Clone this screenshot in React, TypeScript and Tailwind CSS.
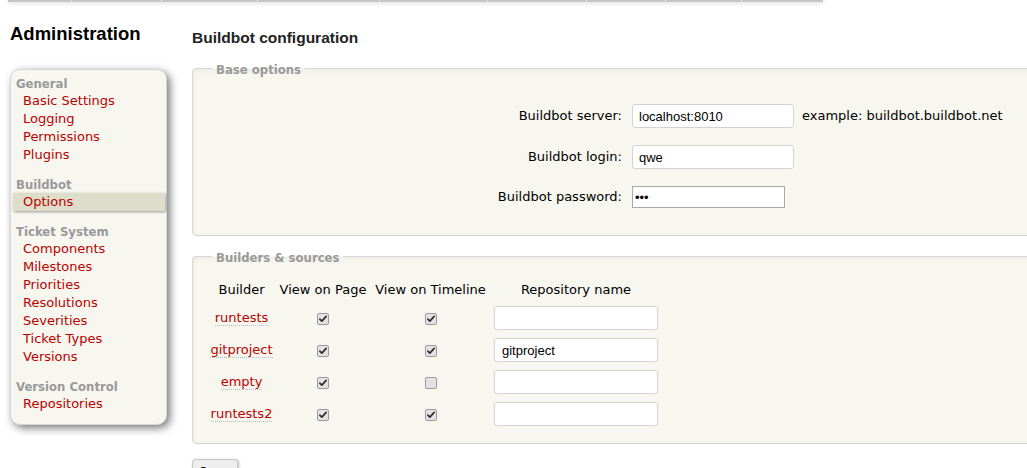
import type { ReactNode } from "react";

type NavGroup = {
  title: string;
  items: string[];
  active?: string;
};

const NAV_GROUPS: NavGroup[] = [
  {
    title: "General",
    items: ["Basic Settings", "Logging", "Permissions", "Plugins"],
  },
  { title: "Buildbot", items: ["Options"], active: "Options" },
  {
    title: "Ticket System",
    items: [
      "Components",
      "Milestones",
      "Priorities",
      "Resolutions",
      "Severities",
      "Ticket Types",
      "Versions",
    ],
  },
  { title: "Version Control", items: ["Repositories"] },
];

const BUILDERS = [
  { name: "runtests", page: true, timeline: true, repo: "" },
  { name: "gitproject", page: true, timeline: true, repo: "gitproject" },
  { name: "empty", page: true, timeline: false, repo: "" },
  { name: "runtests2", page: true, timeline: true, repo: "" },
];

// segments of the main nav bar, cut off at the top of the shot
const NAV_SEGMENTS = [
  "w-[63px]",
  "w-[90px]",
  "w-[96px]",
  "w-[122px]",
  "w-[108px]",
  "w-[99px]",
  "w-[79px]",
  "w-[76px]",
  "w-[82px]",
];

function Checkbox({ checked }: { checked: boolean }) {
  return (
    <span className="inline-flex h-[12px] w-[12px] items-center justify-center rounded-[2px] border border-[#9a9a9a] bg-[#e2e2e2] align-middle">
      {checked ? (
        <svg viewBox="0 0 12 12" className="h-[10px] w-[10px]">
          <path
            d="M2.2 6.2 L4.6 8.6 L9.8 2.8"
            stroke="#2b2b2b"
            strokeWidth="2"
            fill="none"
            strokeLinecap="round"
            strokeLinejoin="round"
          />
        </svg>
      ) : null}
    </span>
  );
}

function Fieldset({
  legend,
  className,
  children,
}: {
  legend: string;
  className: string;
  children: ReactNode;
}) {
  return (
    <fieldset
      className={`w-[860px] rounded-[4px] border border-[#d7d7d7] bg-[#f7f7f0] px-[13px] shadow-[inset_0_1px_5px_rgba(0,0,0,0.06)] ${className}`}
    >
      <legend className="ml-[6px] px-[4px] pt-[4px] text-[11.7px] leading-[14px] font-bold text-[#999]">
        {legend}
      </legend>
      {children}
    </fieldset>
  );
}

export default function App() {
  return (
    <div className="h-[468px] w-full overflow-hidden bg-white font-['DejaVu_Sans',Verdana,sans-serif] text-[13px] text-black">
      <div className="ml-[8px] flex h-[2px] w-fit bg-[#c6c6c6] shadow-[0_1px_4px_#c8c8c8]">
        {NAV_SEGMENTS.map((w, i) => (
          <div
            key={i}
            className={`${w} h-full ${i > 0 ? "border-l border-[#e4e4e4]" : ""}`}
          />
        ))}
      </div>

      <div className="flex">
        <div className="ml-[10px] w-[157px] shrink-0">
          <h1 className="mt-[21px] h-[22px] font-['Liberation_Sans',Arial,sans-serif] text-[18.5px] leading-[22px] font-bold whitespace-nowrap">
            Administration
          </h1>
          <div className="mt-[24px] rounded-[10px] border border-[#d7d7d7] bg-[#f7f7f0] pt-[6px] pr-[1px] pb-[11px] pl-[5px] shadow-[3px_3px_9px_0_#777]">
            {NAV_GROUPS.map((group, gi) => (
              <div
                key={group.title}
                className={gi < NAV_GROUPS.length - 1 ? "mb-[13px]" : ""}
              >
                <div className="h-[16px] text-[11.7px] leading-[16px] font-bold text-[#999]">
                  {group.title}
                </div>
                {group.items.map((item) =>
                  item === group.active ? (
                    <div
                      key={item}
                      className="-ml-[3px] h-[18px] rounded-[1px] bg-[#ddddca] pl-[10px] leading-[18px] text-[#b00] shadow-[1px_1px_3px_0_#999]"
                    >
                      {item}
                    </div>
                  ) : (
                    <div
                      key={item}
                      className="h-[18px] pl-[7px] leading-[18px] text-[#b00]"
                    >
                      {item}
                    </div>
                  ),
                )}
              </div>
            ))}
          </div>
        </div>

        <div className="ml-[25px] shrink-0">
          <h2 className="mt-[27px] h-[18px] font-['Liberation_Sans',Arial,sans-serif] text-[15.5px] leading-[18px] font-bold text-[#222]">
            Buildbot configuration
          </h2>

          <Fieldset legend="Base options" className="mt-[12px] pt-[27px] pb-[27px]">
            <div className="grid grid-cols-[416px_auto_1fr] items-center gap-x-[10px] gap-y-[17px]">
              <div className="text-right">Buildbot server:</div>
              <div className="flex items-center">
                <input
                  type="text"
                  defaultValue="localhost:8010"
                  className="h-[24px] w-[162px] rounded-[3px] border border-[#d3d3d3] bg-white px-[6px] font-['Liberation_Sans',Arial,sans-serif] text-[13px] outline-none"
                />
                <span className="ml-[8px] whitespace-nowrap">
                  example: buildbot.buildbot.net
                </span>
              </div>
              <div />

              <div className="text-right">Buildbot login:</div>
              <input
                type="text"
                defaultValue="qwe"
                className="h-[24px] w-[162px] rounded-[3px] border border-[#d3d3d3] bg-white px-[6px] font-['Liberation_Sans',Arial,sans-serif] text-[13px] outline-none"
              />
              <div />

              <div className="text-right">Buildbot password:</div>
              <input
                type="password"
                defaultValue="qwe"
                className="h-[22px] w-[153px] border border-[#a9a9a9] bg-white px-[2px] font-['Liberation_Sans',Arial,sans-serif] text-[13px] outline-none"
              />
              <div />
            </div>
          </Fieldset>

          <Fieldset legend="Builders & sources" className="mt-[11px] pt-[13px] pb-[13px]">
            <table className="w-[456px] table-fixed border-collapse">
              <thead>
                <tr>
                  <th className="w-[71px] px-0 py-[4px] text-center leading-[16px] font-normal">
                    Builder
                  </th>
                  <th className="w-[92px] px-0 py-[4px] text-center leading-[16px] font-normal whitespace-nowrap">
                    View on Page
                  </th>
                  <th className="w-[123px] px-0 py-[4px] text-center leading-[16px] font-normal whitespace-nowrap">
                    View on Timeline
                  </th>
                  <th className="w-[170px] py-[4px] pr-[4px] pl-[2px] text-center leading-[16px] font-normal whitespace-nowrap">
                    Repository name
                  </th>
                </tr>
              </thead>
              <tbody>
                {BUILDERS.map((b) => (
                  <tr key={b.name}>
                    <td className="h-[32px] px-0 py-[4px] text-center whitespace-nowrap">
                      <span className="border-b border-dotted border-[#bbb] text-[#b00]">
                        {b.name}
                      </span>
                    </td>
                    <td className="px-0 py-[4px] text-center">
                      <Checkbox checked={b.page} />
                    </td>
                    <td className="px-0 py-[4px] text-center">
                      <Checkbox checked={b.timeline} />
                    </td>
                    <td className="py-[4px] pr-[4px] pl-[2px]">
                      <input
                        type="text"
                        defaultValue={b.repo}
                        className="block h-[24px] w-[164px] rounded-[3px] border border-[#d3d3d3] bg-white px-[7px] font-['Liberation_Sans',Arial,sans-serif] text-[13px] outline-none"
                      />
                    </td>
                  </tr>
                ))}
              </tbody>
            </table>
          </Fieldset>

          <button
            type="button"
            className="mt-[15px] h-[26px] rounded-[3px] border border-[#c8c8c8] bg-[#eeeeee] px-[6px] text-[13px] shadow-[1px_1px_3px_#bbb]"
          >
            Save
          </button>
        </div>
      </div>
    </div>
  );
}
